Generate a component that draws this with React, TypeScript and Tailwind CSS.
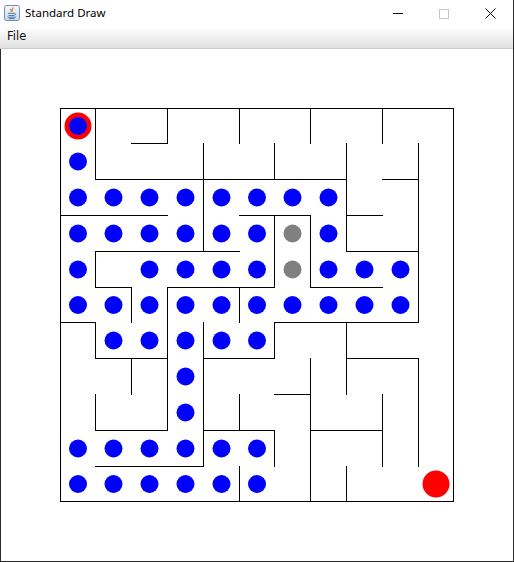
import React from "react";

const X = [60, 95, 131, 167, 203, 239, 274, 310, 346, 382, 418, 453];
const Y = [108, 143, 179, 215, 251, 287, 322, 358, 394, 430, 466, 501];

// vertical walls: [xIndex, yFrom, yTo]
const V: [number, number, number][] = [
  [0, 0, 11],
  [11, 0, 11],
  [1, 0, 2], [1, 4, 5], [1, 6, 7], [1, 8, 9],
  [2, 5, 6], [2, 7, 8],
  [3, 0, 1], [3, 5, 9],
  [4, 1, 4], [4, 6, 10],
  [5, 0, 1], [5, 5, 6], [5, 8, 9], [5, 10, 11],
  [6, 1, 2], [6, 3, 5], [6, 6, 7], [6, 9, 10],
  [7, 0, 1], [7, 3, 5], [7, 7, 11],
  [8, 1, 4], [8, 6, 8], [8, 10, 11],
  [9, 0, 1], [9, 8, 10],
  [10, 1, 6], [10, 7, 10],
];

// horizontal walls: [yIndex, xFrom, xTo]
const H: [number, number, number][] = [
  [0, 0, 11],
  [11, 0, 11],
  [1, 2, 3],
  [2, 1, 8], [2, 9, 10],
  [3, 0, 3], [3, 5, 7], [3, 8, 9],
  [4, 1, 5], [4, 8, 10],
  [5, 1, 2], [5, 3, 6], [5, 7, 9],
  [6, 0, 1], [6, 6, 10],
  [7, 1, 3], [7, 4, 6], [7, 8, 10],
  [8, 6, 7],
  [9, 1, 3], [9, 4, 6], [9, 7, 9],
  [10, 1, 4],
];

const blue: [number, number][] = [
  [0, 1],
  [0, 2], [1, 2], [2, 2], [3, 2], [4, 2], [5, 2], [6, 2], [7, 2],
  [0, 3], [1, 3], [2, 3], [3, 3], [4, 3], [5, 3], [7, 3],
  [0, 4], [2, 4], [3, 4], [4, 4], [5, 4], [7, 4], [8, 4], [9, 4],
  [0, 5], [1, 5], [2, 5], [3, 5], [4, 5], [5, 5], [6, 5], [7, 5], [8, 5], [9, 5],
  [1, 6], [2, 6], [3, 6], [4, 6], [5, 6],
  [3, 7],
  [3, 8],
  [0, 9], [1, 9], [2, 9], [3, 9], [4, 9], [5, 9],
  [0, 10], [1, 10], [2, 10], [3, 10], [4, 10], [5, 10],
];
const gray: [number, number][] = [[6, 3], [6, 4]];

const cx = (c: number) => (X[c] + X[c + 1] + 1) / 2;
const cy = (r: number) => (Y[r] + Y[r + 1] + 1) / 2;

function JavaIcon() {
  return (
    <svg width="16" height="16" viewBox="0 0 16 16">
      <defs>
        <linearGradient id="jg" x1="0" y1="0" x2="0" y2="1">
          <stop offset="0" stopColor="#f3f7fc" />
          <stop offset="1" stopColor="#c9d9ec" />
        </linearGradient>
      </defs>
      <rect x="0.5" y="0.5" width="15" height="15" rx="2" fill="url(#jg)" stroke="#6f8fb8" />
      <path d="M8.5 2.5c1.5 1.2-1.8 2.2 0 4 M7 4c-1 1 0.8 1.6 0 2.6" stroke="#e76f00" strokeWidth="1.1" fill="none" />
      <path d="M4 8.3h6.5c1.4 0 1.4 1.8 0 1.8H10 M4.5 10.5h5.5 M3.5 12.2h8.5 M5 13.6h5.5" stroke="#5877a4" strokeWidth="1" fill="none" />
    </svg>
  );
}

export default function App() {
  return (
    <div className="w-[514px] h-[562px] flex flex-col bg-white border-r border-[#2b2b2b] overflow-hidden">
      {/* Title bar */}
      <div className="h-[27px] flex items-center bg-white shrink-0">
        <div className="ml-[4px] mt-[-2px] flex items-center">
          <JavaIcon />
        </div>
        <span
          className="ml-[5px] mt-[-1px] text-[11.5px] text-black leading-none"
          style={{ fontFamily: '"Noto Sans", "Segoe UI", sans-serif' }}
        >
          Standard Draw
        </span>
        <div className="ml-auto flex items-center h-full">
          <div className="w-[46px] h-full flex items-center justify-center">
            <div className="w-[10px] h-px bg-black" />
          </div>
          <div className="w-[46px] h-full flex items-center justify-center">
            <div className="w-[10px] h-[10px] border border-[#c6c6c6]" />
          </div>
          <div className="w-[46px] h-full flex items-center justify-center">
            <svg width="11" height="11" viewBox="0 0 11 11">
              <path d="M0.5 0.5L10.5 10.5M10.5 0.5L0.5 10.5" stroke="#000" strokeWidth="1" />
            </svg>
          </div>
        </div>
      </div>
      {/* Menu bar */}
      <div className="h-[22px] shrink-0 flex items-center bg-gradient-to-b from-white to-[#e1e1e1] border-b border-[#cacaca]">
        <span
          className="ml-[7px] mt-[-1px] text-[12px] text-[#111] leading-none"
          style={{ fontFamily: '"DejaVu Sans", Tahoma, sans-serif', fontSize: "11.5px" }}
        >
          File
        </span>
      </div>
      {/* Canvas */}
      <div className="flex-1 border-l border-b border-[#2b2b2b] bg-white">
        <svg width="512" height="512" viewBox="1 49 512 512" shapeRendering="crispEdges" className="block">
          {V.map(([i, a, b], k) => (
            <rect key={"v" + k} x={X[i]} y={Y[a]} width={1} height={Y[b] - Y[a] + 1} fill="#000" />
          ))}
          {H.map(([j, a, b], k) => (
            <rect key={"h" + k} x={X[a]} y={Y[j]} width={X[b] - X[a] + 1} height={1} fill="#000" />
          ))}
          <g shapeRendering="geometricPrecision">
            <circle cx={cx(0)} cy={cy(0)} r={13.5} fill="#ff0000" />
            <circle cx={cx(0)} cy={cy(0)} r={9} fill="#0000ff" />
            {blue.map(([c, r], k) => (
              <circle key={"b" + k} cx={cx(c)} cy={cy(r)} r={9} fill="#0000ff" />
            ))}
            {gray.map(([c, r], k) => (
              <circle key={"g" + k} cx={cx(c)} cy={cy(r)} r={9} fill="#808080" />
            ))}
            <circle cx={cx(10)} cy={cy(10)} r={13.5} fill="#ff0000" />
          </g>
        </svg>
      </div>
    </div>
  );
}
